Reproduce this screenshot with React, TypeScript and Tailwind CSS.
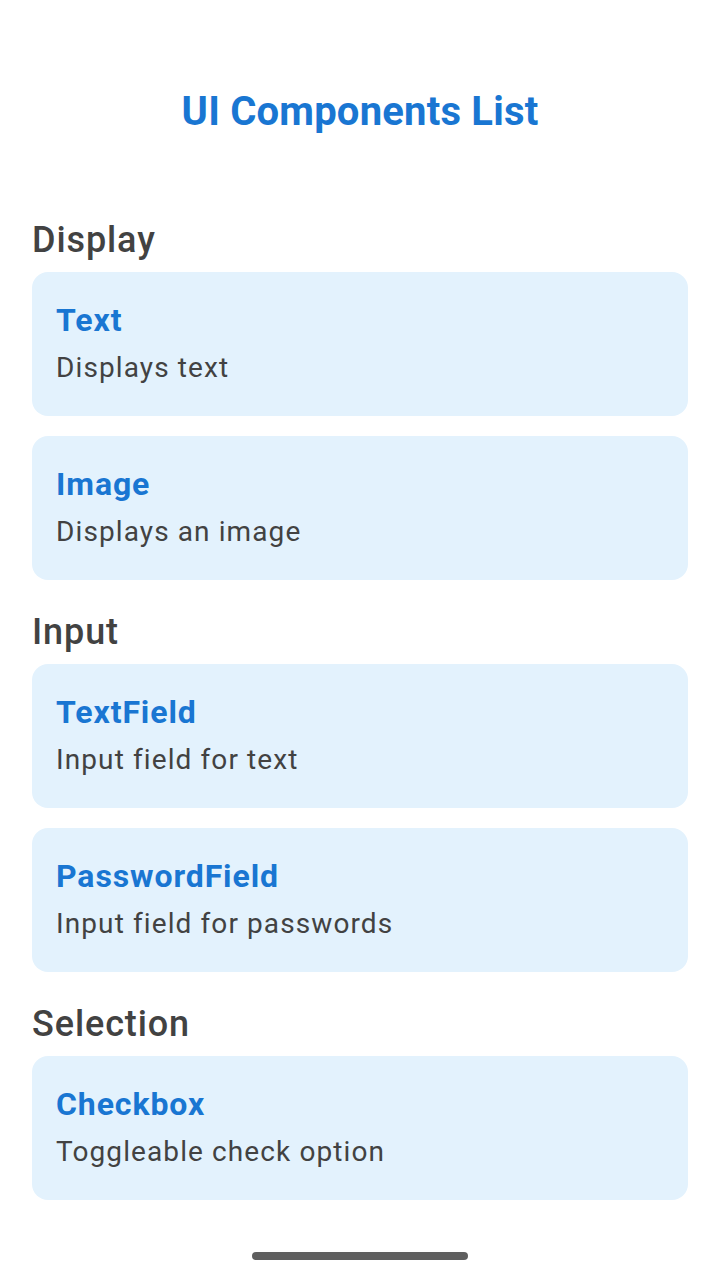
import React from "react";

type Item = { name: string; desc: string };
type Section = { title: string; items: Item[] };

const sections: Section[] = [
  {
    title: "Display",
    items: [
      { name: "Text", desc: "Displays text" },
      { name: "Image", desc: "Displays an image" },
    ],
  },
  {
    title: "Input",
    items: [
      { name: "TextField", desc: "Input field for text" },
      { name: "PasswordField", desc: "Input field for passwords" },
    ],
  },
  {
    title: "Selection",
    items: [{ name: "Checkbox", desc: "Toggleable check option" }],
  },
];

const ComponentCard = ({ name, desc }: Item) => {
  return (
    <div className="bg-[#e3f2fd] rounded-2xl px-6 pt-6 pb-7">
      <h3 className="text-[32px] leading-[48px] font-bold tracking-[0.9px] text-[#1976d2]">{name}</h3>
      <p className="mt-1 text-[28px] leading-[40px] tracking-[1.1px] text-[#424242]">{desc}</p>
    </div>
  );
};

export default function App() {
  return (
    <div
      className="relative w-[720px] h-[1280px] bg-white overflow-hidden"
      style={{ fontFamily: "Roboto, 'Noto Sans', sans-serif" }}
    >
      <div className="px-8 pt-[88px]">
        <h1 className="text-center text-[40px] leading-[48px] font-bold tracking-[0.2px] text-[#1976d2]">
          UI Components List
        </h1>

        <div className="mt-[82px] flex flex-col">
          {sections.map((section, i) => (
            <div key={section.title} className={i > 0 ? "mt-[30px]" : ""}>
              <h2 className="text-[36px] leading-[44px] font-medium tracking-[0.9px] text-[#424242] mb-[10px]">
                {section.title}
              </h2>
              <div className="flex flex-col gap-5">
                {section.items.map((item) => (
                  <ComponentCard key={item.name} {...item} />
                ))}
              </div>
            </div>
          ))}
        </div>
      </div>

      <div className="absolute bottom-[20px] left-1/2 -translate-x-1/2 w-[216px] h-[8px] rounded-full bg-[#5f5f5f]" />
    </div>
  );
}
